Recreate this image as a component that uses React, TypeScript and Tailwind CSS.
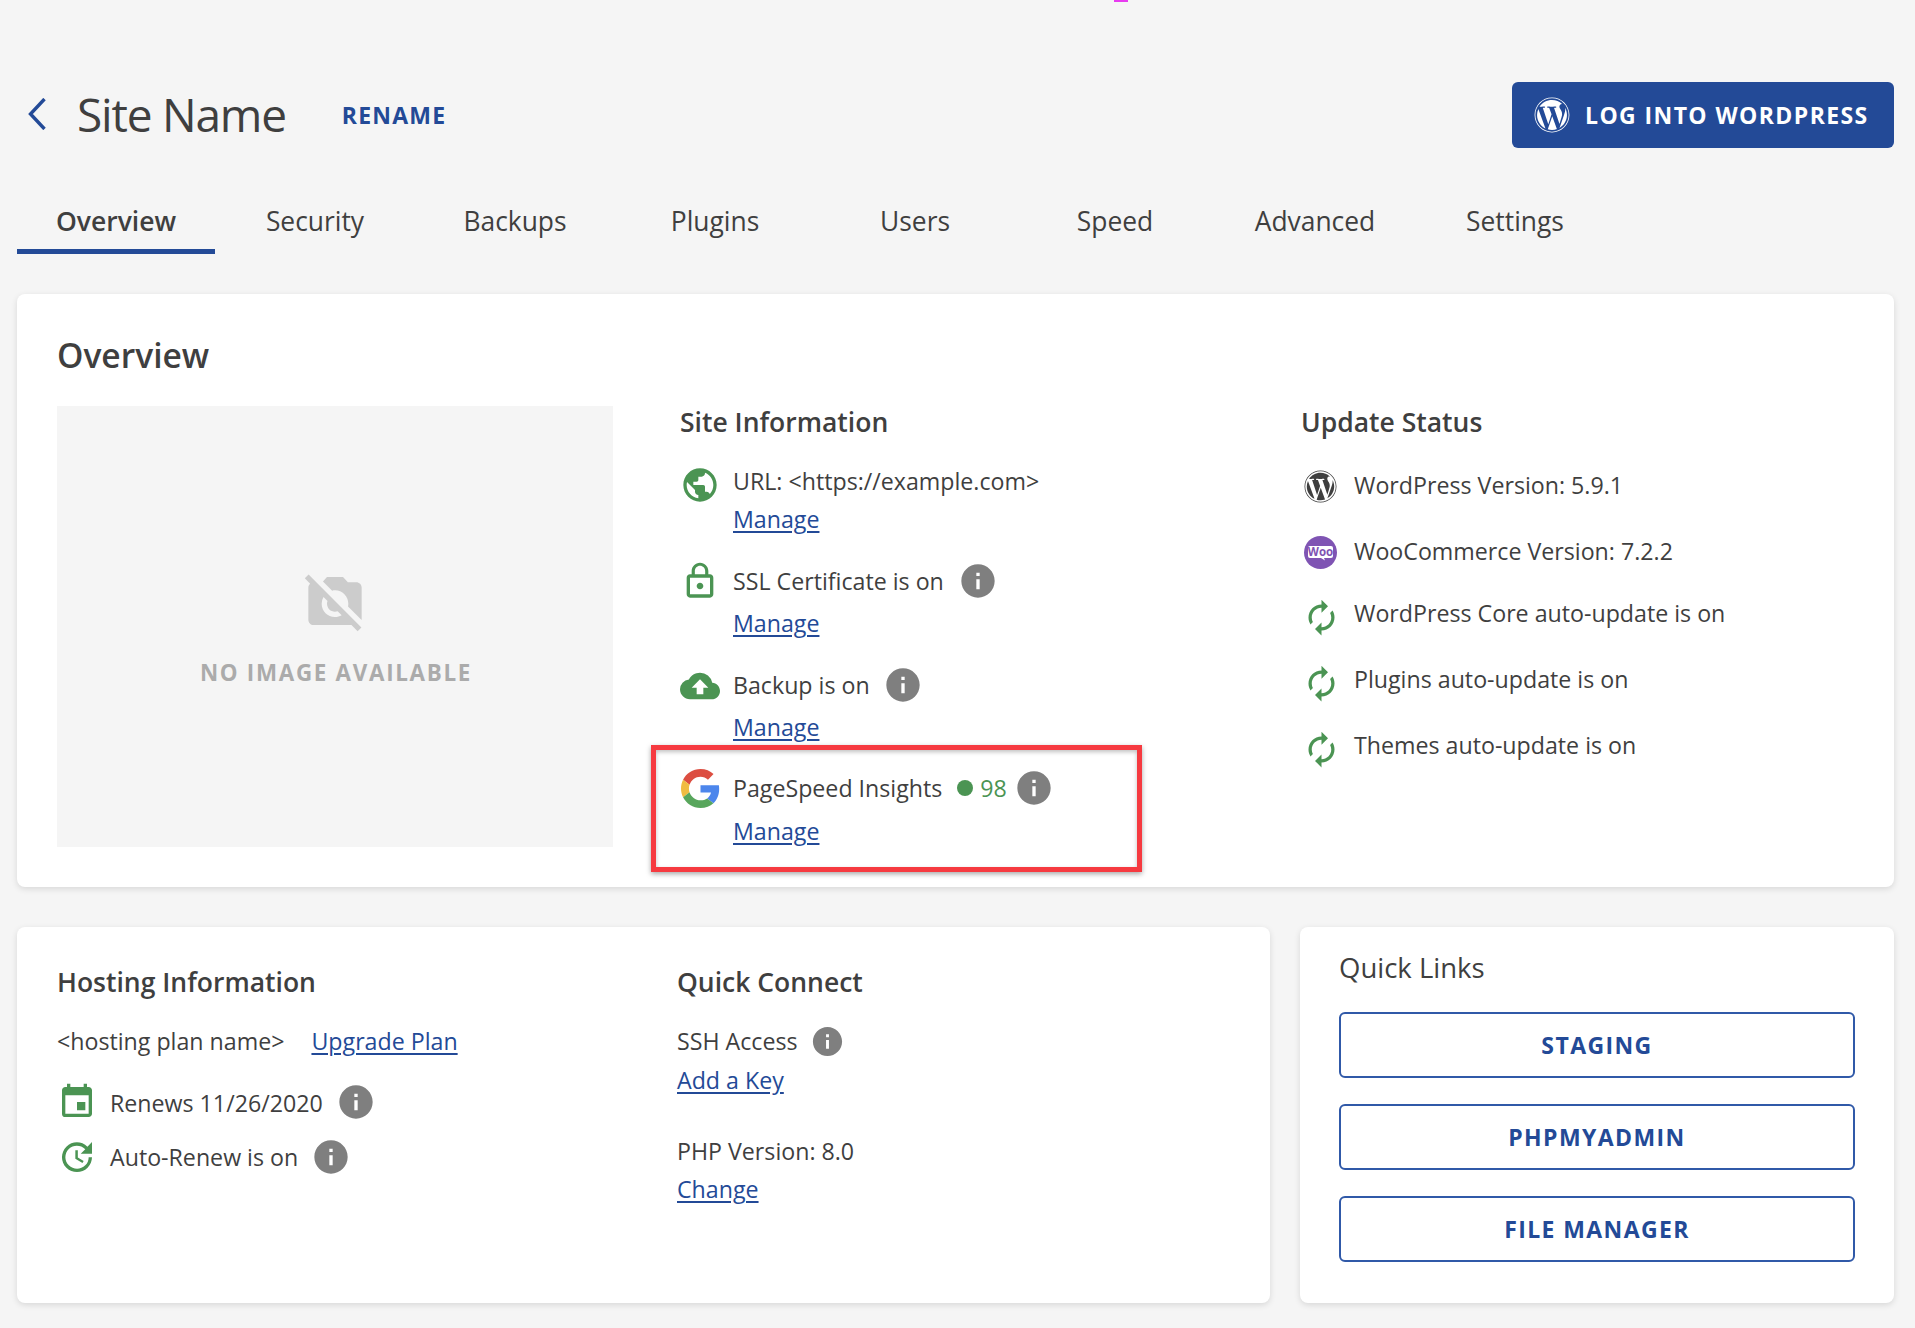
import React from "react";
import { FaWordpress } from "react-icons/fa";
import { MdAutorenew, MdCloudUpload, MdEvent, MdInfo, MdLockOutline, MdNoPhotography, MdPublic, MdUpdate } from "react-icons/md";

const GREEN = "text-[#4b9453]";

function Info({ size = 40, className = "" }: { size?: number; className?: string }) {
  return <MdInfo size={size} className={`shrink-0 text-[#7f7f7f] ${className}`} />;
}

function ManageLink({ children, className = "" }: { children: React.ReactNode; className?: string }) {
  return (
    <a href="#" className={`block h-[34px] w-fit text-[23.2px] leading-[34px] text-[#234a97] underline underline-offset-[3px] decoration-[1.5px] ${className}`}>
      {children}
    </a>
  );
}

function GoogleG() {
  return (
    <svg viewBox="0 0 48 48" width={39} height={39} className="mt-[-2px] ml-px shrink-0 mr-[13px]">
      <path fill="#DC4E41" d="M24 9.5c3.54 0 6.71 1.22 9.21 3.6l6.85-6.85C35.9 2.38 30.47 0 24 0 14.62 0 6.51 5.38 2.56 13.22l7.98 6.19C12.43 13.72 17.74 9.5 24 9.5z" />
      <path fill="#4C86EC" d="M46.98 24.55c0-1.57-.15-3.09-.38-4.55H24v9.02h12.94c-.58 2.96-2.26 5.48-4.78 7.18l7.73 6c4.51-4.18 7.09-10.36 7.09-17.65z" />
      <path fill="#F0BC42" d="M10.53 28.59c-.48-1.45-.76-2.99-.76-4.59s.27-3.14.76-4.59l-7.98-6.19C.92 16.46 0 20.12 0 24c0 3.88.92 7.54 2.56 10.78l7.97-6.19z" />
      <path fill="#58A65C" d="M24 48c6.48 0 11.93-2.13 15.89-5.81l-7.73-6c-2.15 1.45-4.92 2.3-8.16 2.3-6.26 0-11.57-4.22-13.47-9.91l-7.98 6.19C6.51 42.62 14.62 48 24 48z" />
    </svg>
  );
}

function WooIcon() {
  return (
    <svg viewBox="0 0 33 33" width={33} height={33} className="ml-[3px] mr-[17px] mt-[2px] shrink-0">
      <circle cx="16.5" cy="16.5" r="16.5" fill="#7f54b3" />
      <path fill="#fff" d="M6 10h21a2 2 0 0 1 2 2v8a2 2 0 0 1-2 2h-7l1 2.5-4-2.5H6a2 2 0 0 1-2-2v-8a2 2 0 0 1 2-2z" />
      <text x="16.5" y="20.3" textAnchor="middle" fontFamily="'Open Sans', sans-serif" fontWeight="700" fontSize="11.5" fill="#7f54b3">Woo</text>
    </svg>
  );
}

const tabs = ["Overview", "Security", "Backups", "Plugins", "Users", "Speed", "Advanced", "Settings"];

export default function App() {
  return (
    <div className="relative h-[1328px] overflow-hidden bg-[#f5f5f5] pl-[17px] pr-[21px] pt-[82px] font-['Open_Sans',sans-serif] text-[23.2px] text-[#3f3f3f]">
      <div className="absolute left-[1114px] top-0 h-[2px] w-[14px] bg-[#e83cf0]" />

      {/* Header */}
      <header className="flex h-[66px] items-center">
        <svg viewBox="0 0 18 32" width={18} height={32} className="ml-[11px] mt-[-3px] shrink-0" fill="none" stroke="#234a97" strokeWidth="3.4">
          <path d="M16.5 1 2.5 16l14 15" />
        </svg>
        <h1 className="ml-[31px] mt-[-3px] text-[46px] font-normal leading-none tracking-[-1.2px] text-[#3f3f3f]">Site Name</h1>
        <a href="#" className="ml-[56px] mt-[1px] text-[23px] font-bold tracking-[1.2px] text-[#234a97]">RENAME</a>
        <button className="ml-auto flex h-[66px] w-[382px] items-center rounded-[6px] bg-[#234a97] pl-[22px] text-white">
          <FaWordpress size={36} className="shrink-0" />
          <span className="ml-[15px] text-[23px] font-bold tracking-[1.4px]">LOG INTO WORDPRESS</span>
        </button>
      </header>

      {/* Tabs */}
      <nav className="flex h-[106px] items-end">
        {tabs.map((t, i) => (
          <div
            key={t}
            className={`flex h-[66px] items-center justify-center border-b-[5px] pt-[6px] ${i === 0 ? "w-[198px] border-[#234a97] text-[26.5px] font-semibold" : "w-[200px] border-transparent text-[26.4px]"}`}
          >
            {t}
          </div>
        ))}
      </nav>

      {/* Overview card */}
      <section className="mt-[40px] h-[593px] rounded-[8px] bg-white px-[40px] pt-[39px] shadow-[0_2px_6px_rgba(0,0,0,0.12)]">
        <h2 className="h-[44px] text-[33.6px] font-semibold leading-[44px]">Overview</h2>
        <div className="mt-[29px] flex">
          <div className="flex h-[441px] w-[556px] shrink-0 flex-col items-center bg-[#f5f5f5] pt-[163px]">
            <MdNoPhotography size={64} className="text-[#cccccc]" />
            <div className="ml-[2px] mt-[25px] text-[22.4px] font-bold leading-[30px] tracking-[1.7px] text-[#ababab]">NO IMAGE AVAILABLE</div>
          </div>

          <div className="ml-[67px] mt-[-2px] w-[621px] shrink-0">
            <h3 className="h-[36px] text-[26.5px] font-semibold leading-[36px]">Site Information</h3>

            <div className="mt-[24px] flex items-start">
              <MdPublic size={40} className={`mt-px shrink-0 mr-[13px] ${GREEN}`} />
              <div>
                <div className="h-[34px] leading-[34px]">URL: &lt;https://example.com&gt;</div>
                <ManageLink className="mt-[4px]">Manage</ManageLink>
              </div>
            </div>

            <div className="mt-[28px] flex items-start">
              <MdLockOutline size={40} className={`mt-[-3px] shrink-0 mr-[13px] ${GREEN}`} />
              <div>
                <div className="flex h-[34px] items-center leading-[34px]">
                  SSL Certificate is on <Info className="ml-[14px] mt-[-1px]" />
                </div>
                <ManageLink className="mt-[8px]">Manage</ManageLink>
              </div>
            </div>

            <div className="mt-[28px] flex items-start">
              <MdCloudUpload size={40} className={`mt-[-2px] shrink-0 mr-[13px] ${GREEN}`} />
              <div>
                <div className="flex h-[34px] items-center leading-[34px]">
                  Backup is on <Info className="ml-[13px] mt-[-1px]" />
                </div>
                <ManageLink className="mt-[8px]">Manage</ManageLink>
              </div>
            </div>

            <div className="mt-[27px] flex items-start">
              <GoogleG />
              <div>
                <div className="flex h-[34px] items-center leading-[34px]">
                  PageSpeed Insights
                  <span className="ml-[15px] h-[16px] w-[16px] rounded-full bg-[#4b9453]" />
                  <span className={`ml-[7px] ${GREEN}`}>98</span>
                  <Info className="ml-[7px] mt-[-1px]" />
                </div>
                <ManageLink className="mt-[9px]">Manage</ManageLink>
              </div>
            </div>
          </div>

          <div className="mt-[-2px] flex-1">
            <h3 className="h-[36px] text-[26.5px] font-semibold leading-[36px]">Update Status</h3>
            <div className="mt-[28px] flex h-[34px] items-center">
              <FaWordpress size={33} className="ml-[3px] mr-[17px] mt-[2px] shrink-0" />
              WordPress Version: 5.9.1
            </div>
            <div className="mt-[32px] flex h-[34px] items-center">
              <WooIcon />
              WooCommerce Version: 7.2.2
            </div>
            {["WordPress Core auto-update is on", "Plugins auto-update is on", "Themes auto-update is on"].map((t, i) => (
              <div key={t} className={`flex h-[34px] items-start ${i === 0 ? "mt-[28px]" : "mt-[32px]"}`}>
                <MdAutorenew size={39} className={`mt-[2px] shrink-0 ml-px mr-[13px] ${GREEN}`} />
                <span className="leading-[34px]">{t}</span>
              </div>
            ))}
          </div>
        </div>
      </section>

      {/* Highlight annotation */}
      <div className="absolute left-[651px] top-[745px] h-[127px] w-[491px] border-[5px] border-[#f63a40] shadow-[0_2px_5px_rgba(0,0,0,0.35),inset_0_2px_4px_rgba(0,0,0,0.25)]" />

      {/* Bottom row */}
      <div className="mt-[40px] flex gap-[30px]">
        <section className="flex h-[376px] w-[1253px] rounded-[8px] bg-white px-[40px] pt-[37px] shadow-[0_2px_6px_rgba(0,0,0,0.12)]">
          <div className="w-[620px] shrink-0">
            <h3 className="h-[36px] text-[26.5px] font-semibold leading-[36px]">Hosting Information</h3>
            <div className="mt-[24px] flex h-[34px] items-center leading-[34px]">
              <span>&lt;hosting plan name&gt;</span>
              <a href="#" className="ml-[27px] text-[#234a97] underline underline-offset-[3px] decoration-[1.5px]">Upgrade Plan</a>
            </div>
            <div className="mt-[28px] flex h-[34px] items-center">
              <MdEvent size={40} className={`mt-[-3px] mr-[13px] shrink-0 ${GREEN}`} />
              Renews 11/26/2020
              <Info className="ml-[13px] mt-[-3px]" />
            </div>
            <div className="mt-[20px] flex h-[34px] items-center">
              <MdUpdate size={40} className={`mt-[-1px] mr-[13px] shrink-0 ${GREEN}`} />
              Auto-Renew is on
              <Info className="ml-[13px] mt-[-1px]" />
            </div>
          </div>
          <div>
            <h3 className="h-[36px] text-[26.5px] font-semibold leading-[36px]">Quick Connect</h3>
            <div className="mt-[24px] flex h-[34px] items-center leading-[34px]">
              SSH Access
              <Info size={35} className="ml-[12px]" />
            </div>
            <ManageLink className="mt-[5px]">Add a Key</ManageLink>
            <div className="mt-[37px] h-[34px] leading-[34px]">PHP Version: 8.0</div>
            <ManageLink className="mt-[4px]">Change</ManageLink>
          </div>
        </section>

        <section className="h-[376px] flex-1 rounded-[8px] bg-white pl-[39px] pr-[39px] pt-[23px] shadow-[0_2px_6px_rgba(0,0,0,0.12)]">
          <h3 className="h-[36px] text-[27.5px] font-medium leading-[36px]">Quick Links</h3>
          <div className="mt-[26px] flex flex-col gap-[26px]">
            {["STAGING", "PHPMYADMIN", "FILE MANAGER"].map((t) => (
              <button key={t} className="h-[66px] rounded-[6px] border-2 border-[#3059a8] bg-white text-[23px] font-bold tracking-[1.4px] text-[#234a97]">
                {t}
              </button>
            ))}
          </div>
        </section>
      </div>
    </div>
  );
}
